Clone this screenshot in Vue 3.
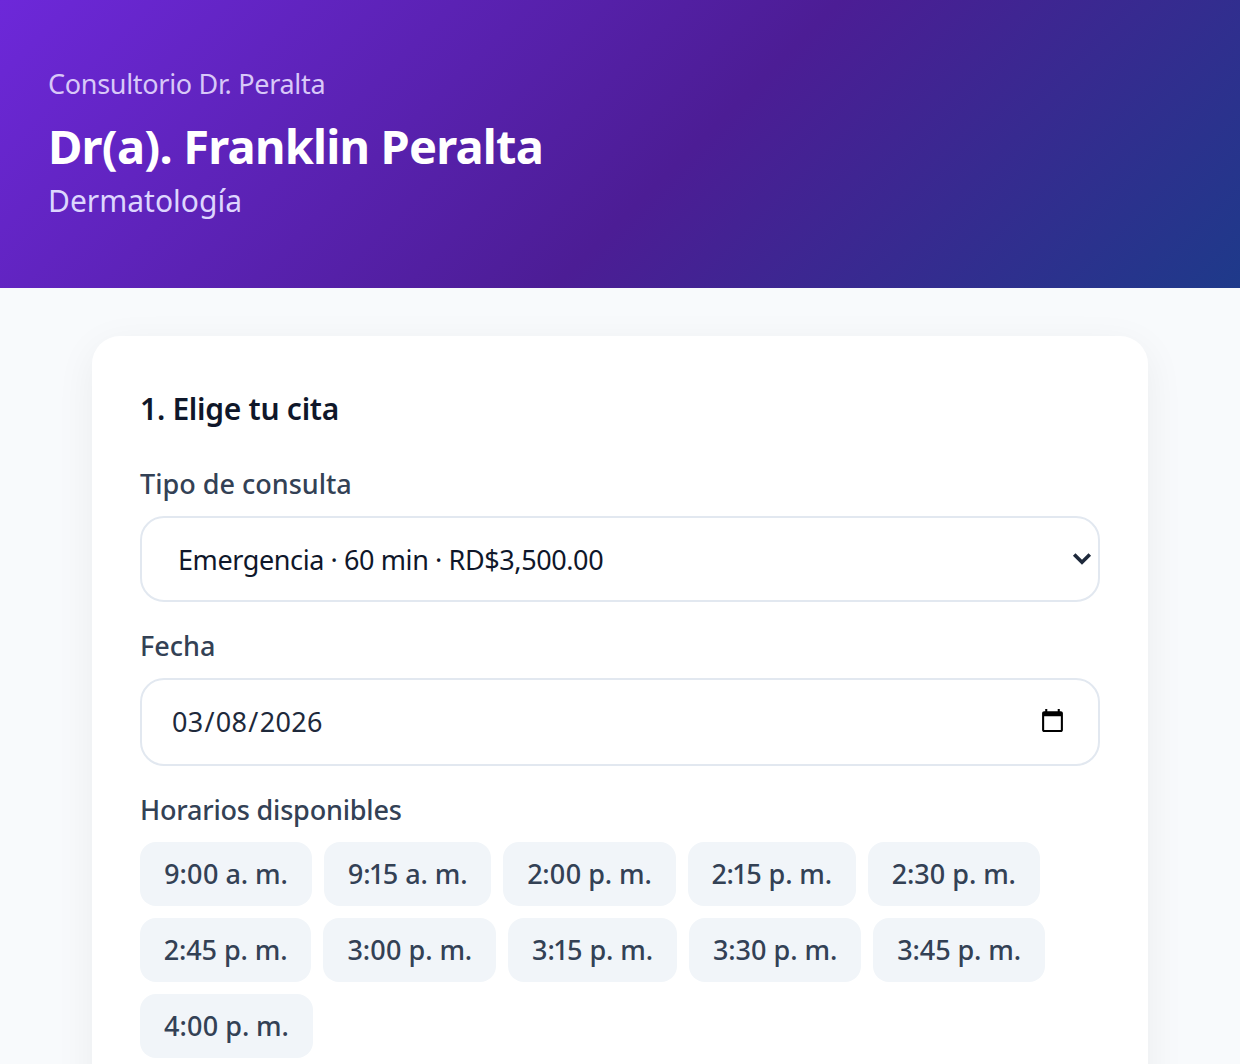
<script setup>
import { ref } from "vue";

const consultType = ref("emergencia");
const date = ref("2026-03-08");

const slots = [
  "9:00 a. m.",
  "9:15 a. m.",
  "2:00 p. m.",
  "2:15 p. m.",
  "2:30 p. m.",
  "2:45 p. m.",
  "3:00 p. m.",
  "3:15 p. m.",
  "3:30 p. m.",
  "3:45 p. m.",
  "4:00 p. m.",
];
</script>

<template>
  <div class="page">
    <header class="hero">
      <p class="clinic">Consultorio Dr. Peralta</p>
      <h1 class="doctor">Dr(a). Franklin Peralta</h1>
      <p class="specialty">Dermatología</p>
    </header>

    <main class="content">
      <section class="card">
        <h2 class="step-title">1. Elige tu cita</h2>

        <label class="field-label" for="tipo">Tipo de consulta</label>
        <div class="select-wrap">
          <select id="tipo" v-model="consultType" class="control select">
            <option value="emergencia">Emergencia · 60 min · RD$3,500.00</option>
          </select>
          <svg class="chevron" viewBox="0 0 20 14" aria-hidden="true">
            <path d="M2.2 3.4 10 11.2l7.8-7.8" fill="none" stroke="#1e293b" stroke-width="3.6" />
          </svg>
        </div>

        <label class="field-label" for="fecha">Fecha</label>
        <input id="fecha" v-model="date" type="date" class="control date" />

        <p class="field-label label-tight">Horarios disponibles</p>
        <div class="slots">
          <button v-for="slot in slots" :key="slot" type="button" class="slot">{{ slot }}</button>
        </div>
      </section>
    </main>
  </div>
</template>

<style scoped>
.page {
  height: 1064px;
  overflow: hidden;
  background: #f8fafc;
  font-family: "Noto Sans", "Open Sans", sans-serif;
  color: #0f172a;
}

.hero {
  height: 288px;
  box-sizing: border-box;
  padding: 64px 48px 0;
  background: linear-gradient(135deg, #6d28d9 0%, #4c1d95 55%, #1e3a8a 100%);
  color: #fff;
}

.clinic {
  margin: 0;
  font-size: 27px;
  line-height: 40px;
  letter-spacing: -0.3px;
  color: #d8c8f8;
}

.doctor {
  margin: 12px 0 0;
  font-size: 47px;
  line-height: 61px;
  letter-spacing: -0.8px;
  font-weight: 700;
}

.specialty {
  margin: 2px 0 0;
  font-size: 30px;
  line-height: 44px;
  color: #ddd6fe;
}

.content {
  padding: 48px 92px 0;
}

.card {
  min-height: 800px;
  box-sizing: border-box;
  padding: 48px;
  background: #fff;
  border-radius: 28px;
  box-shadow: 0 10px 40px rgba(15, 23, 42, 0.06);
}

.step-title {
  margin: 0 0 30px;
  font-size: 30px;
  line-height: 50px;
  letter-spacing: -0.28px;
  font-weight: 600;
}

.field-label {
  display: block;
  margin: 0 0 12px;
  font-size: 27px;
  line-height: 40px;
  font-weight: 500;
  color: #334155;
}

.label-tight {
  letter-spacing: -0.2px;
}

.select-wrap {
  position: relative;
  margin-bottom: 24px;
}

.control {
  display: block;
  width: 100%;
  box-sizing: border-box;
  background: #fff;
  border: 2px solid #e2e8f0;
  border-radius: 24px;
  font-family: inherit;
  font-size: 27px;
  color: #0f172a;
  outline: none;
}

.select {
  height: 86px;
  padding: 0 36px;
  letter-spacing: -0.4px;
  appearance: none;
}

.chevron {
  position: absolute;
  top: 35px;
  right: 8px;
  width: 20px;
  height: 14px;
}

.date {
  height: 88px;
  padding: 0 30px 2px 29px;
  margin-bottom: 24px;
  letter-spacing: 0.3px;
  color: #1e293b;
}

.slots {
  display: flex;
  flex-wrap: wrap;
  gap: 12px;
}

.slot {
  height: 64px;
  padding: 0 24px 2px;
  border: none;
  border-radius: 16px;
  background: #f1f5f9;
  font-family: inherit;
  font-size: 27px;
  font-weight: 500;
  font-variant-numeric: proportional-nums;
  letter-spacing: -0.1px;
  color: #334155;
}
</style>

<style>
body {
  margin: 0;
}
</style>
